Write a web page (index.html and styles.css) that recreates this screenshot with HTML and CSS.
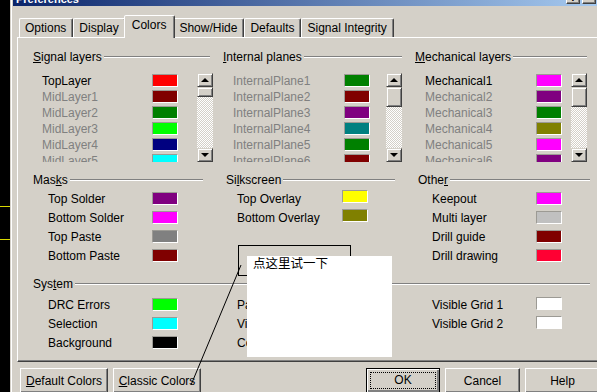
FILE: index.html
```html
<!DOCTYPE html>
<html lang="en">
<head>
  <meta charset="UTF-8">
  <title>Preferences</title>
  <link rel="stylesheet" href="styles.css">
</head>
<body>
  <div class="desk">
    <div class="trace"></div>
    <div class="trace"></div>
  </div>

  <div class="dialog">
    <div class="titlebar">
      <span class="title">Preferences</span>
      <span class="tbtn help-btn">?</span>
      <span class="tbtn">&#215;</span>
    </div>

    <div class="tabs">
      <div class="tab">Options</div>
      <div class="tab">Display</div>
      <div class="tab active">Colors</div>
      <div class="tab">Show/Hide</div>
      <div class="tab">Defaults</div>
      <div class="tab">Signal Integrity</div>
    </div>

    <div class="panel">
      <!-- layer lists -->
      <div class="layers">
        <div class="group">
          <div class="head"><span><u>S</u>ignal layers</span></div>
          <div class="lbox">
            <div class="list list-signal">
              <div class="row"><span class="name">TopLayer</span><span class="sw red"></span></div>
              <div class="row"><span class="name dis">MidLayer1</span><span class="sw maroon"></span></div>
              <div class="row"><span class="name dis">MidLayer2</span><span class="sw green"></span></div>
              <div class="row"><span class="name dis">MidLayer3</span><span class="sw lime"></span></div>
              <div class="row"><span class="name dis">MidLayer4</span><span class="sw navy"></span></div>
              <div class="row"><span class="name dis">MidLayer5</span><span class="sw aqua"></span></div>
            </div>
            <div class="sb">
              <div class="sb-btn"><i class="arrow up"></i></div>
              <div class="sb-thumb small"></div>
              <div class="sb-track"></div>
              <div class="sb-btn"><i class="arrow down"></i></div>
            </div>
          </div>
        </div>

        <div class="group">
          <div class="head"><span><u>I</u>nternal planes</span></div>
          <div class="lbox">
            <div class="list list-plane">
              <div class="row"><span class="name dis">InternalPlane1</span><span class="sw green"></span></div>
              <div class="row"><span class="name dis">InternalPlane2</span><span class="sw maroon"></span></div>
              <div class="row"><span class="name dis">InternalPlane3</span><span class="sw purple"></span></div>
              <div class="row"><span class="name dis">InternalPlane4</span><span class="sw teal"></span></div>
              <div class="row"><span class="name dis">InternalPlane5</span><span class="sw green"></span></div>
              <div class="row"><span class="name dis">InternalPlane6</span><span class="sw maroon"></span></div>
            </div>
            <div class="sb">
              <div class="sb-btn"><i class="arrow up"></i></div>
              <div class="sb-thumb"></div>
              <div class="sb-track"></div>
              <div class="sb-btn"><i class="arrow down"></i></div>
            </div>
          </div>
        </div>

        <div class="group">
          <div class="head last"><span><u>M</u>echanical layers</span></div>
          <div class="lbox">
            <div class="list list-mech">
              <div class="row"><span class="name">Mechanical1</span><span class="sw fuchsia"></span></div>
              <div class="row"><span class="name dis">Mechanical2</span><span class="sw purple"></span></div>
              <div class="row"><span class="name dis">Mechanical3</span><span class="sw green"></span></div>
              <div class="row"><span class="name dis">Mechanical4</span><span class="sw olive"></span></div>
              <div class="row"><span class="name dis">Mechanical5</span><span class="sw fuchsia"></span></div>
              <div class="row"><span class="name dis">Mechanical6</span><span class="sw purple"></span></div>
            </div>
            <div class="sb">
              <div class="sb-btn"><i class="arrow up"></i></div>
              <div class="sb-thumb"></div>
              <div class="sb-track"></div>
              <div class="sb-btn"><i class="arrow down"></i></div>
            </div>
          </div>
        </div>
      </div>

      <!-- masks / silkscreen / other -->
      <div class="mid">
        <div class="group">
          <div class="head short"><span>Mas<u>k</u>s</span></div>
          <div class="items items-a">
            <div class="mrow"><span class="name">Top Solder</span><span class="sw purple"></span></div>
            <div class="mrow"><span class="name">Bottom Solder</span><span class="sw fuchsia"></span></div>
            <div class="mrow"><span class="name">Top Paste</span><span class="sw gray"></span></div>
            <div class="mrow"><span class="name">Bottom Paste</span><span class="sw maroon"></span></div>
          </div>
        </div>
        <div class="group">
          <div class="head short"><span>Si<u>l</u>kscreen</span></div>
          <div class="items items-b raised">
            <div class="mrow"><span class="name">Top Overlay</span><span class="sw yellow"></span></div>
            <div class="mrow"><span class="name">Bottom Overlay</span><span class="sw olive"></span></div>
          </div>
        </div>
        <div class="group">
          <div class="head last"><span>Othe<u>r</u></span></div>
          <div class="items items-c">
            <div class="mrow"><span class="name">Keepout</span><span class="sw fuchsia"></span></div>
            <div class="mrow"><span class="name">Multi layer</span><span class="sw silver"></span></div>
            <div class="mrow"><span class="name">Drill guide</span><span class="sw maroon"></span></div>
            <div class="mrow"><span class="name">Drill drawing</span><span class="sw crimson"></span></div>
          </div>
        </div>
      </div>

      <!-- system -->
      <div class="system">
        <div class="head wide"><span>Sys<u>t</u>em</span></div>
        <div class="sys-grid">
          <div class="items items-a">
            <div class="mrow"><span class="name">DRC Errors</span><span class="sw lime"></span></div>
            <div class="mrow"><span class="name">Selection</span><span class="sw aqua"></span></div>
            <div class="mrow"><span class="name">Background</span><span class="sw black"></span></div>
          </div>
          <div class="items items-b">
            <div class="mrow"><span class="name">Pad Holes</span><span class="sw olive"></span></div>
            <div class="mrow"><span class="name">Via Holes</span><span class="sw gray"></span></div>
            <div class="mrow"><span class="name">Connections</span><span class="sw silver"></span></div>
          </div>
          <div class="items items-c raised">
            <div class="mrow"><span class="name">Visible Grid 1</span><span class="sw white"></span></div>
            <div class="mrow"><span class="name">Visible Grid 2</span><span class="sw white"></span></div>
          </div>
        </div>
      </div>
    </div>

    <div class="btnrow">
      <button class="btn wide-btn"><u>D</u>efault Colors</button>
      <button class="btn wide-btn"><u>C</u>lassic Colors</button>
      <span class="spacer"></span>
      <button class="btn default"><span class="focus">OK</span></button>
      <button class="btn">Cancel</button>
      <button class="btn">Help</button>
    </div>
  </div>

  <!-- annotation pasted over the dialog -->
  <div class="callout"></div>
  <div class="note">点这里试一下</div>
  <svg class="pointer" width="597" height="392" viewBox="0 0 597 392">
    <line x1="241" y1="265" x2="191" y2="385" stroke="#000" stroke-width="1"/>
  </svg>
</body>
</html>
```

FILE: styles.css
```css
body {
  margin: 0;
  width: 597px;
  height: 392px;
  overflow: hidden;
  display: flex;
  position: relative;
  background: #000;
  font: 12px "Liberation Sans", Arial, sans-serif;
  color: #000;
}
.desk {
  width: 10px;
  flex: none;
  padding-top: 206px;
  box-sizing: border-box;
}
.trace {
  height: 1px;
  background: #d8d800;
  margin-bottom: 32px;
}
.dialog {
  flex: none;
  width: 600px;
  height: 420px;
  margin-top: -14px;
  box-sizing: border-box;
  padding: 2px 0 0 2px;
  background: #d4d0c8;
  border-left: 1px solid #d4d0c8;
  box-shadow: inset 1px 0 #fff;
}
.titlebar {
  width: 585px;
  height: 18px;
  box-sizing: border-box;
  display: flex;
  align-items: flex-end;
  padding: 0 2px 1px 3px;
  background: linear-gradient(90deg, #0a246a, #a6caf0);
  color: #fff;
  font-weight: bold;
  font-size: 11px;
  line-height: 12px;
}
.tbtn {
  align-self: center;
  width: 14px;
  height: 14px;
  box-sizing: border-box;
  background: #d4d0c8;
  color: #000;
  font-size: 11px;
  text-align: center;
  border: 1px solid;
  border-color: #fff #404040 #404040 #fff;
  box-shadow: inset -1px -1px #808080;
}
.help-btn {
  margin-left: auto;
  margin-right: 2px;
}

/* tabs */
.tabs {
  display: flex;
  align-items: flex-end;
  height: 22px;
  margin-top: 9px;
  padding-left: 6px;
}
.tab {
  height: 19px;
  box-sizing: border-box;
  padding: 0 6px 0 5px;
  line-height: 18px;
  border: 1px solid;
  border-bottom: none;
  border-color: #fff #404040 transparent #fff;
  border-radius: 2px 2px 0 0;
  box-shadow: inset -1px 0 #808080;
}
.tab.active {
  height: 23px;
  margin: 0 -2px -1px;
  padding: 0 8px 0 7px;
  line-height: 18px;
  position: relative;
  z-index: 1;
  background: #d4d0c8;
}

/* panel */
.panel {
  width: 590px;
  height: 325px;
  margin-left: 4px;
  box-sizing: border-box;
  padding: 12px 0 0 15px;
  border: 1px solid;
  border-color: #fff #404040 #404040 #fff;
  box-shadow: inset -1px -1px #808080;
}
.head {
  display: flex;
  align-items: center;
  height: 14px;
  line-height: 14px;
  margin-right: 13px;
}
.head::after {
  content: "";
  flex: 1;
  margin-left: 2px;
  border-top: 1px solid #808080;
  border-bottom: 1px solid #fff;
}
.head.short { margin-right: 23px; }
.head.last { margin-right: 0; }
.head.wide { width: 557px; margin-right: 0; }

.layers {
  display: grid;
  grid-template-columns: 190px 192px 172px;
}
.lbox {
  display: flex;
  margin-top: 9px;
  height: 89px;
}
.list {
  height: 89px;
  overflow: hidden;
  box-sizing: border-box;
}
.list-signal { width: 164px; padding-left: 9px; }
.list-plane { width: 163px; padding-left: 10px; }
.list-mech { width: 157px; padding-left: 10px; }
.row {
  display: flex;
  align-items: center;
  height: 16px;
}
.list-signal .name { width: 110px; }
.list-plane .name, .list-mech .name { width: 111px; }
.row .sw {
  align-self: flex-start;
  margin-top: 1px;
}
.dis { color: #808080; }

.sw {
  flex: none;
  width: 26px;
  height: 13px;
  box-sizing: border-box;
  border: 1px solid;
  border-color: #9c9a94 #fff #fff #9c9a94;
}
.red { background: #ff0000; }
.maroon { background: #800000; }
.green { background: #008000; }
.lime { background: #00ff00; }
.navy { background: #000080; }
.aqua { background: #00ffff; }
.purple { background: #800080; }
.teal { background: #008080; }
.fuchsia { background: #ff00ff; }
.olive { background: #808000; }
.yellow { background: #ffff00; }
.gray { background: #808080; }
.silver { background: #c0c0c0; }
.black { background: #000; }
.white { background: #fff; }
.crimson { background: #ff0033; }

/* scrollbar */
.sb {
  width: 16px;
  height: 89px;
  display: flex;
  flex-direction: column;
  background-color: #fff;
  background-image: repeating-conic-gradient(#d4d0c8 0 25%, #fff 0 50%);
  background-size: 2px 2px;
}
.sb-btn, .sb-thumb {
  flex: none;
  box-sizing: border-box;
  background: #d4d0c8;
  border: 1px solid;
  border-color: #d4d0c8 #404040 #404040 #d4d0c8;
  box-shadow: inset 1px 1px #fff, inset -1px -1px #808080;
}
.sb-btn {
  height: 14px;
  display: flex;
  align-items: center;
  justify-content: center;
}
.sb-thumb { height: 20px; }
.sb-thumb.small { height: 10px; }
.sb-track { flex: 1; }
.arrow {
  width: 0;
  height: 0;
  border-left: 4px solid transparent;
  border-right: 4px solid transparent;
}
.arrow.up { border-bottom: 4px solid #000; }
.arrow.down { border-top: 4px solid #000; }

/* masks, silkscreen, other, system */
.mid, .sys-grid {
  display: grid;
  grid-template-columns: 193px 192px 172px;
}
.mid { margin-top: 11px; }
.items { margin-top: 2px; }
.items-a { padding-left: 15px; }
.items-a .name { width: 104px; }
.items-b { padding-left: 11px; }
.items-b .name { width: 105px; }
.items-c { padding-left: 14px; }
.items-c .name { width: 104px; }
.mrow {
  display: flex;
  align-items: center;
  height: 19px;
}
.mrow .sw {
  align-self: flex-start;
  margin-top: 3px;
}
.raised .mrow .sw { margin-top: 1px; }
.items-c.raised .mrow .sw { margin-top: 2px; }

.system { margin-top: 12px; }
.sys-grid .items { margin-top: 4px; }

/* bottom buttons */
.btnrow {
  display: flex;
  width: 587px;
  gap: 6px;
  margin-top: 6px;
  padding-left: 7px;
  box-sizing: border-box;
}
.spacer { flex: 1; }
.btn {
  width: 75px;
  height: 25px;
  padding: 0;
  font: inherit;
  color: #000;
  background: #d4d0c8;
  border: 1px solid;
  border-color: #fff #404040 #404040 #fff;
  box-shadow: inset -1px -1px #808080;
}
.btn.wide-btn { width: 88px; }
.btn + .btn { margin-left: -1px; }
.btn.default {
  width: 74px;
  border: 1px solid #000;
  box-shadow: inset 1px 1px #fff, inset -2px -2px #808080;
  padding: 3px;
}
.focus {
  display: block;
  height: 100%;
  box-sizing: border-box;
  border: 1px dotted #000;
  line-height: 15px;
}

/* annotation */
.callout {
  position: absolute;
  left: 238px;
  top: 245px;
  width: 113px;
  height: 31px;
  box-sizing: border-box;
  border: 1px solid #000;
}
.note {
  position: absolute;
  left: 247px;
  top: 256px;
  width: 145px;
  height: 101px;
  box-sizing: border-box;
  padding-left: 6px;
  background: #fff;
  font: 12.5px/14px "Noto Sans CJK SC", sans-serif;
}
.pointer {
  position: absolute;
  left: 0;
  top: 0;
}
```
